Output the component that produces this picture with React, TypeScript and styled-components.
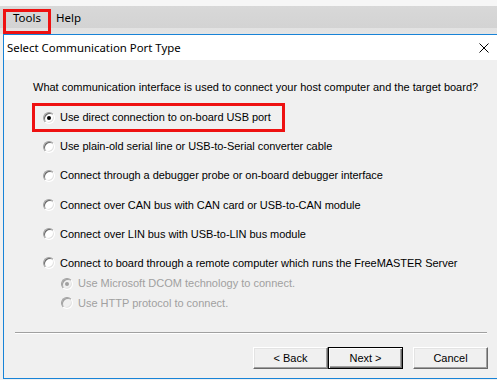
import React from "react";
import styled, { createGlobalStyle, css } from "styled-components";

const GlobalStyle = createGlobalStyle`
  html, body { margin: 0; padding: 0; background: #f0f0f0; }
  * { box-sizing: border-box; }
`;

const Screen = styled.div`
  width: 497px;
  height: 380px;
  overflow: hidden;
  background: #f0f0f0;
  display: flex;
  flex-direction: column;
  font-family: "Liberation Sans", Arial, sans-serif;
`;

const MenuBar = styled.div`
  height: 34px;
  flex: none;
  display: flex;
  align-items: flex-end;
  padding-left: 3px;
  background: linear-gradient(
    to bottom,
    #f6f6f6 0px,
    #f6f6f6 6px,
    #d8d8d8 6px,
    #d3d3d3 28px,
    #e2e2e2 28px,
    #e4e4e4 34px
  );
`;

const MenuItem = styled.div<{ $highlighted?: boolean }>`
  height: 25px;
  border: ${(p) => (p.$highlighted ? "3px solid #ee1111" : "2px solid transparent")};
  padding: 0 ${(p) => (p.$highlighted ? "7px" : "3px")};
  padding-top: ${(p) => (p.$highlighted ? "0px" : "1px")};
  font-family: "Noto Sans", "Open Sans", sans-serif;
  font-size: 11.5px;
  line-height: 12px;
  color: #000;
`;

const Dialog = styled.div`
  width: 505px;
  height: 345px;
  flex: none;
  margin-left: 3px;
  border: 1px solid #1883d7;
  display: flex;
  flex-direction: column;
`;

const TitleBar = styled.div`
  height: 25px;
  flex: none;
  background: #ffffff;
  display: flex;
  align-items: center;
  justify-content: space-between;
`;

const Title = styled.span`
  padding-left: 3px;
  font-family: "Noto Sans", "Open Sans", sans-serif;
  font-size: 11.4px;
  color: #000;
`;

const CloseButton = styled.div`
  width: 46px;
  height: 25px;
  display: flex;
  align-items: center;
  justify-content: center;
`;

const Body = styled.div`
  flex: 1;
  background: #f0f0f0;
  display: flex;
  flex-direction: column;
  padding: 21px 19px 9px 29px;
  font-size: 11px;
  line-height: 13px;
  color: #000;
`;

const Question = styled.div`
  height: 13px;
  white-space: nowrap;
  margin-bottom: 9px;
`;

const OptionList = styled.div`
  display: flex;
  flex-direction: column;
  align-items: flex-start;
  gap: 0.2px;
  margin-left: -1px;
`;

const OptionRow = styled.div<{ $highlighted?: boolean }>`
  display: flex;
  align-items: center;
  gap: 5px;
  height: 29px;
  border: 3px solid ${(p) => (p.$highlighted ? "#ee1111" : "transparent")};
  padding: 0 11px 0 8px;
  white-space: nowrap;
  letter-spacing: -0.05px;
`;

const SubOptionList = styled.div`
  display: flex;
  flex-direction: column;
  margin-top: -4px;
  margin-left: 28px;
`;

const SubOptionRow = styled.div`
  display: flex;
  align-items: center;
  gap: 5px;
  height: 19.5px;
  white-space: nowrap;
  color: #a0a0a0;
`;

const Radio = styled.span<{ $checked?: boolean; $disabled?: boolean }>`
  position: relative;
  flex: none;
  width: 12px;
  height: 12px;
  border-radius: 50%;
  border: 1px solid;
  border-color: #a0a0a0 #ffffff #ffffff #a0a0a0;
  box-shadow: inset 1px 1px 0 #696969, inset -1px -1px 0 #e3e3e3;
  background: ${(p) => (p.$disabled ? "#f0f0f0" : "#ffffff")};
  ${(p) =>
    p.$disabled &&
    css`
      box-shadow: inset 1px 1px 0 #a0a0a0, inset -1px -1px 0 #e3e3e3;
    `}
  &::after {
    content: "";
    display: ${(p) => (p.$checked ? "block" : "none")};
    position: absolute;
    left: 3px;
    top: 3px;
    width: 4px;
    height: 4px;
    border-radius: 50%;
    background: ${(p) => (p.$disabled ? "#a0a0a0" : "#000")};
  }
`;

const Separator = styled.div`
  margin-top: auto;
  margin-left: -18px;
  margin-right: 1px;
  height: 2px;
  border-top: 1px solid #a0a0a0;
  border-bottom: 1px solid #ffffff;
  margin-bottom: 13px;
`;

const ButtonRow = styled.div`
  display: flex;
  justify-content: flex-end;
`;

const Button = styled.button<{ $default?: boolean; $gapLeft?: number }>`
  width: 75px;
  height: 22px;
  margin-left: ${(p) => p.$gapLeft ?? 0}px;
  padding: 0;
  font-family: "Liberation Sans", Arial, sans-serif;
  font-size: 11px;
  color: #000;
  background: #f0f0f0;
  border: 1px solid;
  border-color: #ffffff #696969 #696969 #ffffff;
  box-shadow: inset -1px -1px 0 #a0a0a0, inset 1px 1px 0 #e3e3e3;
  ${(p) =>
    p.$default &&
    css`
      border-color: #000;
      box-shadow: inset 1px 1px 0 #ffffff, inset -1px -1px 0 #696969,
        inset -2px -2px 0 #a0a0a0;
    `}
`;

const options = [
  "Use direct connection to on-board USB port",
  "Use plain-old serial line or USB-to-Serial converter cable",
  "Connect through a debugger probe or on-board debugger interface",
  "Connect over CAN bus with CAN card or USB-to-CAN module",
  "Connect over LIN bus with USB-to-LIN bus module",
  "Connect to board through a remote computer which runs the FreeMASTER Server",
];

const subOptions = [
  { label: "Use Microsoft DCOM technology to connect.", checked: true },
  { label: "Use HTTP protocol to connect.", checked: false },
];

export default function App() {
  return (
    <>
      <GlobalStyle />
      <Screen>
        <MenuBar>
          <MenuItem $highlighted>Tools</MenuItem>
          <MenuItem>Help</MenuItem>
        </MenuBar>
        <Dialog>
          <TitleBar>
            <Title>Select Communication Port Type</Title>
            <CloseButton>
              <svg width="10" height="10" viewBox="0 0 10 10">
                <path d="M0.5 0.5 L9.5 9.5 M9.5 0.5 L0.5 9.5" stroke="#000" strokeWidth="1" />
              </svg>
            </CloseButton>
          </TitleBar>
          <Body>
            <Question>
              What communication interface is used to connect your host computer and the target board?
            </Question>
            <OptionList>
              {options.map((o, i) => (
                <OptionRow key={o} $highlighted={i === 0}>
                  <Radio $checked={i === 0} />
                  <span>{o}</span>
                </OptionRow>
              ))}
            </OptionList>
            <SubOptionList>
              {subOptions.map((s) => (
                <SubOptionRow key={s.label}>
                  <Radio $checked={s.checked} $disabled />
                  <span>{s.label}</span>
                </SubOptionRow>
              ))}
            </SubOptionList>
            <Separator />
            <ButtonRow>
              <Button>&lt; Back</Button>
              <Button $default>Next &gt;</Button>
              <Button $gapLeft={10}>Cancel</Button>
            </ButtonRow>
          </Body>
        </Dialog>
      </Screen>
    </>
  );
}
